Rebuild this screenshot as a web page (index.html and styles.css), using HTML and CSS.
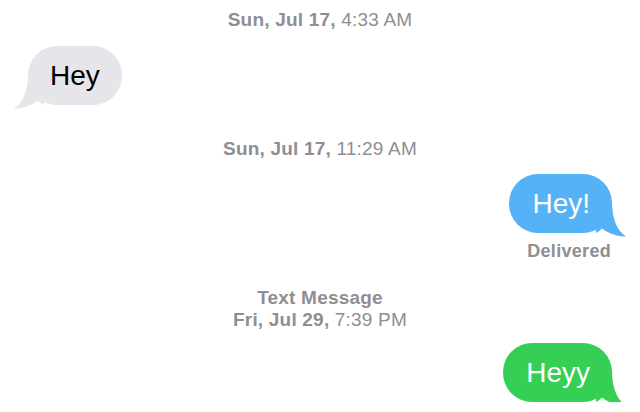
FILE: index.html
```html
<!DOCTYPE html>
<html>
<head>
    <title>messages</title>
    <link rel="stylesheet" href="styles.css">
</head>
<body>
    <div class="thread">
        <p class="stamp stamp-first"><b>Sun, Jul 17,</b> 4:33 AM</p>
        <div class="row row-in">
            <div class="bubble bubble-in">
                Hey
                <svg class="tail tail-in" viewBox="0 0 30 36"><path d="M0 0 H16 C16 16 20 29 30 35.5 C22 35.5 13 33 6 27.5 C4 29.5 2 31 0 32 Z"/></svg>
            </div>
        </div>

        <p class="stamp stamp-gap"><b>Sun, Jul 17,</b> 11:29 AM</p>
        <div class="row row-out">
            <div class="bubble bubble-imsg">
                Hey!
                <svg class="tail tail-out" viewBox="0 0 30 36"><path d="M0 0 H16 C16 16 20 29 30 35.5 C22 35.5 13 33 6 27.5 C4 29.5 2 31 0 32 Z"/></svg>
            </div>
        </div>
        <p class="status">Delivered</p>

        <p class="stamp stamp-sms"><b>Text Message</b><br><b>Fri, Jul 29,</b> 7:39 PM</p>
        <div class="row row-out">
            <div class="bubble bubble-sms">
                Heyy
                <svg class="tail tail-out" viewBox="0 0 30 36"><path d="M0 0 H16 C16 16 20 29 30 35.5 C22 35.5 13 33 6 27.5 C4 29.5 2 31 0 32 Z"/></svg>
            </div>
        </div>
    </div>
</body>
</html>
```

FILE: styles.css
```css
:root {
    --gray: #8e8e93;
    --in: #e5e5ea;
    --imsg: #55b2f7;
    --sms: #35cf55;
}

body {
    margin: 0;
    background: #fff;
    font-family: "Liberation Sans", Arial, sans-serif;
}

.thread {
    display: flex;
    flex-direction: column;
    padding-top: 9px;
}

.stamp {
    margin: 0;
    text-align: center;
    font-size: 19px;
    line-height: 22px;
    color: var(--gray);
    letter-spacing: 0.2px;
}

.stamp b {
    font-weight: bold;
}

.stamp-gap {
    margin-top: 33px;
}

.stamp-sms {
    margin-top: 26px;
}

.row {
    display: flex;
    padding: 0 28px;
    margin-top: 15px;
}

.row-out {
    justify-content: flex-end;
    margin-top: 14px;
}

.stamp-sms + .row {
    margin-top: 12px;
}

.bubble {
    position: relative;
    height: 59px;
    line-height: 59px;
    padding: 0 22px 0 23px;
    border-radius: 29px;
    font-size: 28px;
}

.bubble-in {
    background: var(--in);
    color: #000;
    padding: 0 22px;
}

.bubble-imsg {
    background: var(--imsg);
    color: #fff;
}

.bubble-sms {
    background: var(--sms);
    color: #fff;
}

.tail {
    position: absolute;
    bottom: -4px;
    width: 30px;
    height: 36px;
}

.tail-out {
    right: -14px;
}

.tail-in {
    left: -14px;
    transform: scaleX(-1);
}

.bubble-in .tail { fill: var(--in); }
.bubble-imsg .tail { fill: var(--imsg); }
.bubble-sms .tail { fill: var(--sms); }

.status {
    margin: 8px 0 0;
    padding-right: 29px;
    text-align: right;
    font-size: 18px;
    line-height: 20px;
    font-weight: bold;
    color: var(--gray);
    letter-spacing: 0.3px;
}
```
